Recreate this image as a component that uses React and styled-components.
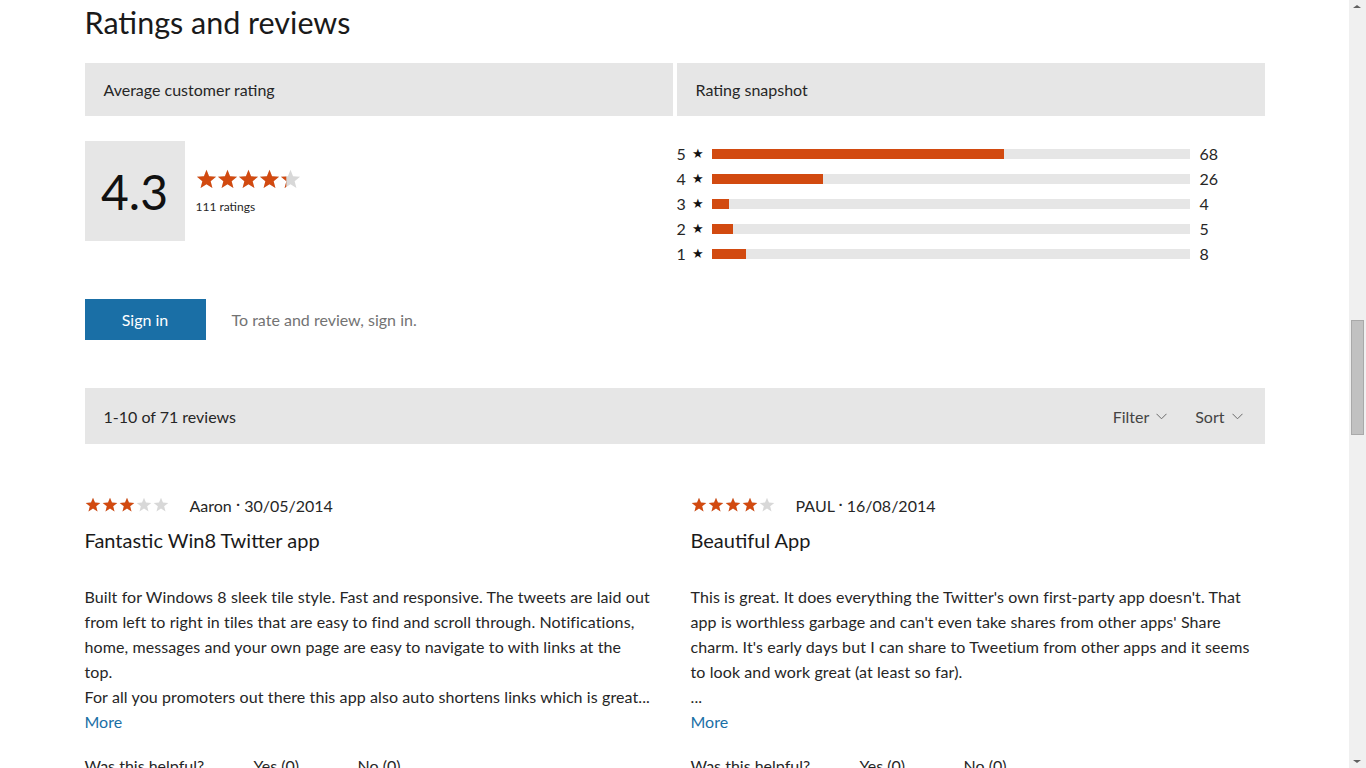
import styled, { createGlobalStyle } from 'styled-components';

const ORANGE = '#d24a10';
const BLUE = '#1a6fa6';
const GREY = '#e6e6e6';

const GlobalStyle = createGlobalStyle`
  html, body {
    margin: 0;
    padding: 0;
    overflow: hidden;
    background: #fff;
  }
  body {
    font-family: Lato, 'Noto Sans', sans-serif;
    color: #262626;
    padding-right: 17px;
  }
`;

const snapshot = [
  { stars: 5, count: 68 },
  { stars: 4, count: 26 },
  { stars: 3, count: 4 },
  { stars: 2, count: 5 },
  { stars: 1, count: 8 },
];
const TOTAL = 111;

// lines kept as the store breaks them
const reviews = [
  {
    rating: 3,
    author: 'Aaron',
    date: '30/05/2014',
    title: 'Fantastic Win8 Twitter app',
    lines: [
      'Built for Windows 8 sleek tile style. Fast and responsive. The tweets are laid out',
      'from left to right in tiles that are easy to find and scroll through. Notifications,',
      'home, messages and your own page are easy to navigate to with links at the',
      'top.',
      'For all you promoters out there this app also auto shortens links which is great...',
    ],
  },
  {
    rating: 4,
    author: 'PAUL',
    date: '16/08/2014',
    title: 'Beautiful App',
    lines: [
      "This is great. It does everything the Twitter's own first-party app doesn't. That",
      "app is worthless garbage and can't even take shares from other apps' Share",
      "charm. It's early days but I can share to Tweetium from other apps and it seems",
      'to look and work great (at least so far).',
      '...',
    ],
  },
];

const STAR_PATH =
  'M10 0.8l2.45 6.2 6.65 0.4-5.15 4.25 1.7 6.45L10 14.5l-5.65 3.6 1.7-6.45L0.9 7.4l6.65-0.4z';

const Star = ({ size, fill, id }) => (
  <svg width={size} height={size} viewBox='0 0 20 20'>
    <defs>
      <clipPath id={id}>
        <rect x='0' y='0' width={20 * fill} height='20' />
      </clipPath>
    </defs>
    <path d={STAR_PATH} fill='#d8d8d8' />
    <path d={STAR_PATH} fill={ORANGE} clipPath={`url(#${id})`} />
  </svg>
);

const Stars = ({ value, size, gap, prefix }) => (
  <StarRow $gap={gap}>
    {[0, 1, 2, 3, 4].map((i) => (
      <Star
        key={i}
        id={`${prefix}-${i}`}
        size={size}
        fill={Math.max(0, Math.min(1, value - i))}
      />
    ))}
  </StarRow>
);

const Chevron = () => (
  <svg width='11' height='7' viewBox='0 0 11 7'>
    <polyline points='0.5,0.8 5.5,5.8 10.5,0.8' fill='none' stroke='#6a6a6a' strokeWidth='1' />
  </svg>
);

const App = () => {
  return (
    <>
      <GlobalStyle />
      <Page>
        <Title>Ratings and reviews</Title>

        <TwoCols>
          <SectionHead>Average customer rating</SectionHead>
          <SectionHead>Rating snapshot</SectionHead>
        </TwoCols>

        <TwoCols>
          <Average>
            <ScoreBox>4.3</ScoreBox>
            <AverageMeta>
              <Stars value={4.3} size={21} gap={0} prefix='avg' />
              <RatingCount>111 ratings</RatingCount>
            </AverageMeta>
          </Average>

          <Snapshot>
            {snapshot.map((row) => (
              <SnapRow key={row.stars}>
                <SnapLabel>
                  {row.stars} <small>★</small>
                </SnapLabel>
                <Track>
                  <Fill style={{ width: `${(row.count / TOTAL) * 100}%` }} />
                </Track>
                <SnapCount>{row.count}</SnapCount>
              </SnapRow>
            ))}
          </Snapshot>
        </TwoCols>

        <SignInRow>
          <SignInButton>Sign in</SignInButton>
          <Hint>To rate and review, sign in.</Hint>
        </SignInRow>

        <ReviewsBar>
          <span>1-10 of 71 reviews</span>
          <BarActions>
            <Dropdown>
              Filter <Chevron />
            </Dropdown>
            <Dropdown>
              Sort <Chevron />
            </Dropdown>
          </BarActions>
        </ReviewsBar>

        <ReviewGrid>
          {reviews.map((r, idx) => (
            <Review key={r.author}>
              <ReviewMeta>
                <Stars value={r.rating} size={16} gap={1} prefix={`rv${idx}`} />
                <Byline>
                  {r.author} <Dot>·</Dot> {r.date}
                </Byline>
              </ReviewMeta>
              <ReviewTitle>{r.title}</ReviewTitle>
              <ReviewBody>
                {r.lines.map((line, i) => (
                  <span key={i}>{line}</span>
                ))}
              </ReviewBody>
              <MoreLink href='#'>More</MoreLink>
              <Helpful>
                <span>Was this helpful?</span>
                <span>Yes (0)</span>
                <span>No (0)</span>
              </Helpful>
            </Review>
          ))}
        </ReviewGrid>
      </Page>
      <Scrollbar>
        <ArrowUp />
        <Thumb />
        <ArrowDown />
      </Scrollbar>
    </>
  );
};

const Page = styled.main`
  width: 1180px;
  margin: 0 auto;
  padding-top: 4px;
`;

const Title = styled.h2`
  margin: 0 0 23px;
  font-size: 30.5px;
  line-height: 36px;
  font-weight: 400;
  color: #1a1a1a;
`;

const TwoCols = styled.div`
  display: grid;
  grid-template-columns: 588px 588px;
  column-gap: 4px;
  align-items: start;
`;

const SectionHead = styled.div`
  height: 53px;
  background: ${GREY};
  display: flex;
  align-items: center;
  padding-left: 19px;
  font-size: 16px;
  color: #262626;
`;

const Average = styled.div`
  display: flex;
  align-items: flex-start;
  margin-top: 25px;
`;

const ScoreBox = styled.div`
  width: 100px;
  height: 100px;
  background: ${GREY};
  display: flex;
  align-items: center;
  justify-content: center;
  font-size: 48px;
  color: #111;
`;

const AverageMeta = styled.div`
  margin-left: 11px;
  padding-top: 28px;
  display: flex;
  flex-direction: column;
  gap: 9px;
`;

const StarRow = styled.div`
  display: flex;
  gap: ${(p) => p.$gap}px;

  svg {
    display: block;
  }
`;

const RatingCount = styled.div`
  font-size: 12px;
  color: #262626;
`;

const Snapshot = styled.div`
  margin-top: 25px;
  display: flex;
  flex-direction: column;
`;

const SnapRow = styled.div`
  display: grid;
  grid-template-columns: 35px 1fr 75px;
  align-items: center;
  height: 25px;
`;

const SnapLabel = styled.div`
  display: flex;
  align-items: center;
  gap: 6px;
  font-size: 16px;
  color: #262626;

  small {
    font-size: 13px;
    line-height: 1;
    color: #111;
  }
`;

const Track = styled.div`
  height: 10px;
  background: ${GREY};
`;

const Fill = styled.div`
  height: 100%;
  background: ${ORANGE};
`;

const SnapCount = styled.div`
  padding-left: 10px;
  font-size: 16px;
  color: #262626;
`;

const SignInRow = styled.div`
  display: flex;
  align-items: center;
  gap: 26px;
  margin-top: 33px;
`;

const SignInButton = styled.button`
  width: 121px;
  height: 41px;
  border: 0;
  background: ${BLUE};
  color: #fff;
  font-family: inherit;
  font-size: 16px;
  cursor: pointer;
`;

const Hint = styled.span`
  font-size: 16px;
  color: #737373;
`;

const ReviewsBar = styled.div`
  margin-top: 48px;
  height: 56px;
  background: ${GREY};
  display: flex;
  align-items: center;
  justify-content: space-between;
  padding: 0 22px 0 19px;
  font-size: 16px;
  color: #262626;
`;

const BarActions = styled.div`
  display: flex;
  gap: 28px;
`;

const Dropdown = styled.span`
  display: flex;
  align-items: center;
  gap: 7px;
  color: #444;
`;

const ReviewGrid = styled.div`
  display: grid;
  grid-template-columns: 575px 574px;
  column-gap: 31px;
  margin-top: 50px;
`;

const Review = styled.article`
  display: flex;
  flex-direction: column;
`;

const ReviewMeta = styled.div`
  display: flex;
  align-items: center;
  height: 22px;
  gap: 21px;
`;

const Byline = styled.span`
  font-size: 16px;
  color: #262626;
`;

const Dot = styled.span`
  position: relative;
  top: -3px;
`;

const ReviewTitle = styled.h3`
  margin: 11px 0 0;
  font-size: 20px;
  line-height: 26px;
  font-weight: 400;
  color: #1a1a1a;
`;

const ReviewBody = styled.div`
  margin-top: 31px;
  display: flex;
  flex-direction: column;
  font-size: 16px;
  line-height: 25px;
  letter-spacing: 0.1px;
  color: #262626;

  span {
    white-space: nowrap;
  }
`;

const MoreLink = styled.a`
  font-size: 16px;
  line-height: 25px;
  color: ${BLUE};
  text-decoration: none;
  align-self: flex-start;
`;

const Helpful = styled.div`
  margin-top: 19px;
  display: flex;
  font-size: 16px;
  line-height: 25px;
  color: #262626;

  span:nth-child(1) {
    width: 169px;
  }
  span:nth-child(2) {
    width: 104px;
  }
`;

const Scrollbar = styled.div`
  position: fixed;
  top: 0;
  right: 0;
  width: 17px;
  height: 100vh;
  background: #f0f0f0;
`;

const Thumb = styled.div`
  position: absolute;
  left: 2px;
  top: 320px;
  width: 11px;
  height: 113px;
  background: #c1c1c1;
  border: 1px solid #a9a9a9;
`;

const ArrowUp = styled.div`
  position: absolute;
  top: 5px;
  left: 4px;
  border-left: 4px solid transparent;
  border-right: 4px solid transparent;
  border-bottom: 3px solid #606060;
`;

const ArrowDown = styled(ArrowUp)`
  top: auto;
  bottom: 5px;
  border-bottom: 0;
  border-top: 3px solid #606060;
`;

export default App;
